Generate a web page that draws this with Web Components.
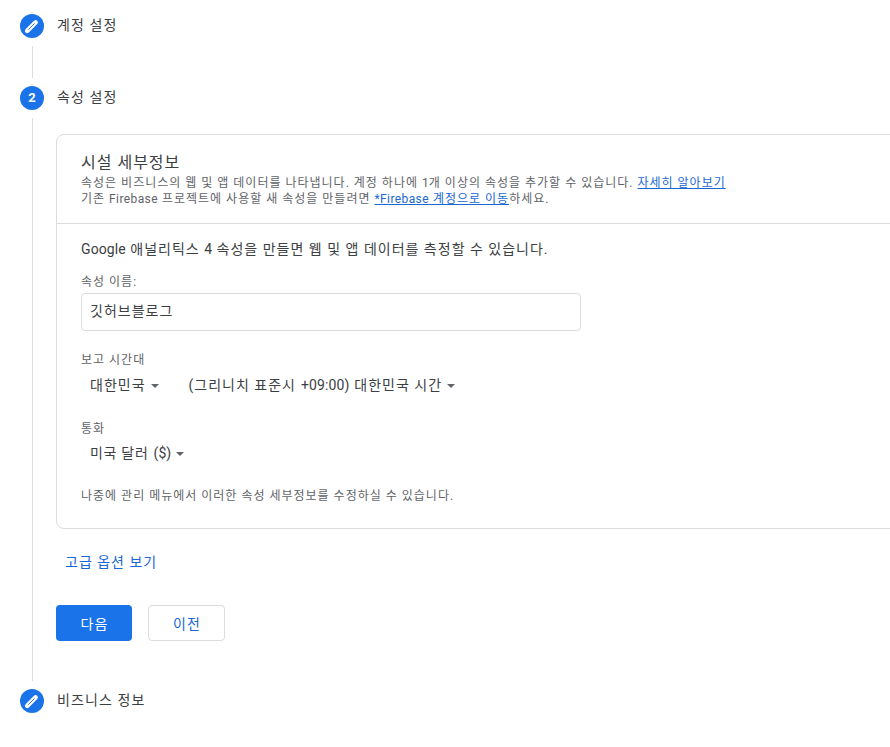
<!DOCTYPE html>
<html lang="ko">
<head>
<meta charset="utf-8">
<title>속성 설정</title>
<style>
  html, body { margin: 0; padding: 0; background: #fff; overflow: hidden; height: 747px; }
  body { font-family: Roboto, "Noto Sans CJK KR", sans-serif; color: #3c4043; }
</style>
</head>
<body>
<setup-stepper>
  <setup-step icon="edit" label="계정 설정" gap="32"></setup-step>
  <setup-step icon="2" label="속성 설정" gap="563">
    <property-card></property-card>
  </setup-step>
  <setup-step icon="edit" label="비즈니스 정보" last></setup-step>
</setup-stepper>

<script>
const stepTemplate = document.createElement("template");
stepTemplate.innerHTML = `
  <style>
    :host {
      display: grid;
      grid-template-columns: 24px 1fr;
      column-gap: 12px;
    }
    #badge {
      width: 24px;
      height: 24px;
      border-radius: 50%;
      background: #1a73e8;
      color: #fff;
      font: 700 13px/24px Roboto, sans-serif;
      text-align: center;
      display: flex;
      align-items: center;
      justify-content: center;
    }
    #label {
      font-size: 14px;
      line-height: 24px;
      color: #3c4043;
      letter-spacing: 1.1px;
      padding-left: 1px;
      transform: translateY(-1px);
    }
    #rail {
      display: flex;
      justify-content: center;
      padding: 8px 0 8px;
    }
    #rail i {
      display: block;
      width: 1px;
      background: #dadce0;
    }
    #body { min-width: 0; }
  </style>
  <div id="badge"></div>
  <div id="label"></div>
  <div id="rail"><i></i></div>
  <div id="body"><slot></slot></div>
`;

class SetupStep extends HTMLElement {
  connectedCallback() {
    if (this.shadowRoot) return;
    const root = this.attachShadow({ mode: "open" });
    root.appendChild(stepTemplate.content.cloneNode(true));
    const icon = this.getAttribute("icon");
    const badge = root.querySelector("#badge");
    if (icon === "edit") {
      badge.innerHTML = `<svg width="24" height="24" viewBox="0 0 24 24"><path d="M7.2 16.8 15.6 8.4" stroke="#fff" stroke-width="4.6" stroke-linecap="round" fill="none"/><path d="M8.4 15.6 14.6 9.4" stroke="#1a73e8" stroke-width=".9" fill="none"/></svg>`;
    } else {
      badge.textContent = icon;
    }
    root.querySelector("#label").textContent = this.getAttribute("label");
    const rail = root.querySelector("#rail");
    if (this.hasAttribute("last")) {
      rail.style.display = "none";
    } else {
      rail.style.minHeight = this.getAttribute("gap") + "px";
      rail.querySelector("i").style.height = this.getAttribute("gap") + "px";
    }
  }
}

const stepperTemplate = document.createElement("template");
stepperTemplate.innerHTML = `
  <style>
    :host {
      display: block;
      padding: 14px 0 0 20px;
      width: 1000px;
    }
  </style>
  <slot></slot>
`;

class SetupStepper extends HTMLElement {
  constructor() {
    super();
    this.attachShadow({ mode: "open" }).appendChild(stepperTemplate.content.cloneNode(true));
  }
}

const dropdownTemplate = document.createElement("template");
dropdownTemplate.innerHTML = `
  <style>
    :host {
      display: inline-flex;
      align-items: center;
      font-size: 14px;
      line-height: 24px;
      color: #3c4043;
      letter-spacing: 1px;
      gap: 5px;
    }
    svg { display: block; margin-top: 2px; }
  </style>
  <slot></slot>
  <svg width="8" height="4" viewBox="0 0 8 4"><path d="M0 0h8L4 4z" fill="#5f6368"/></svg>
`;

class FieldDropdown extends HTMLElement {
  constructor() {
    super();
    this.attachShadow({ mode: "open" }).appendChild(dropdownTemplate.content.cloneNode(true));
  }
}

const cardTemplate = document.createElement("template");
cardTemplate.innerHTML = `
  <style>
    :host {
      display: block;
      padding-top: 24px;
      font-size: 12px;
    }
    a { color: #1967d2; }
    .en { letter-spacing: .1px; }
    .fb { letter-spacing: .4px; }
    #card {
      box-sizing: border-box;
      width: 900px;
      height: 395px;
      border: 1px solid #dadce0;
      border-radius: 8px;
    }
    header {
      box-sizing: border-box;
      height: 89px;
      padding: 16px 24px 0;
      border-bottom: 1px solid #dadce0;
    }
    h2 {
      margin: 0;
      font-size: 16px;
      line-height: 24px;
      font-weight: 400;
      color: #3c4043;
      letter-spacing: 1px;
    }
    header p {
      margin: 0;
      font-size: 12px;
      line-height: 16px;
      color: #5f6368;
      letter-spacing: 1px;
    }
    section { padding: 15px 24px 0; }
    .lead { font-size: 14px; line-height: 20px; color: #3c4043; letter-spacing: 1px; }
    .label { font-size: 12px; line-height: 16px; color: #5f6368; letter-spacing: 1px; }
    #name {
      box-sizing: border-box;
      width: 500px;
      height: 38px;
      margin-top: 3px;
      padding: 0 8px;
      border: 1px solid #dadce0;
      border-radius: 4px;
      font-size: 14px;
      line-height: 34px;
      color: #3c4043;
      letter-spacing: 1px;
    }
    .row { display: flex; gap: 30px; padding: 5px 0 0 9px; }
    .row.single { padding-top: 4px; letter-spacing: .8px; }
    .row.single field-dropdown { letter-spacing: .7px; }
    #foot { font-size: 12px; line-height: 16px; color: #5f6368; margin-top: 23px; letter-spacing: 1px; }
    #more {
      display: block;
      margin: 23px 0 0 8px;
      padding-left: 1px;
      font-size: 14px;
      line-height: 20px;
      color: #1967d2;
      text-decoration: none;
      letter-spacing: 1px;
    }
    #actions { display: flex; gap: 16px; margin-top: 33px; }
    button {
      box-sizing: border-box;
      height: 36px;
      border-radius: 4px;
      font: inherit;
      font-size: 14px;
      padding: 0 0 0 1px;
      letter-spacing: 1px;
    }
    #next { width: 76px; background: #1a73e8; color: #fff; border: 0; }
    #prev { width: 77px; background: #fff; color: #1967d2; border: 1px solid #dadce0; }
  </style>
  <div id="card">
    <header>
      <h2>시설 세부정보</h2>
      <p>속성은 비즈니스의 웹 및 앱 데이터를 나타냅니다. 계정 하나에 <span class="en">1</span>개 이상의 속성을 추가할 수 있습니다. <a href="#">자세히 알아보기</a></p>
      <p>기존 <span class="fb">Firebase</span> 프로젝트에 사용할 새 속성을 만들려면 <a href="#"><span class="fb">*Firebase</span> 계정으로 이동</a>하세요.</p>
    </header>
    <section>
      <div class="lead"><span class="en">Google</span> 애널리틱스 <span class="en">4</span> 속성을 만들면 웹 및 앱 데이터를 측정할 수 있습니다.</div>
      <div class="label" style="margin-top:15px">속성 이름:</div>
      <div id="name">깃허브블로그</div>
      <div class="label" style="margin-top:21px">보고 시간대</div>
      <div class="row">
        <field-dropdown>대한민국</field-dropdown>
        <field-dropdown>(그리니치 표준시 <span class="en">+09:00)</span> 대한민국 시간</field-dropdown>
      </div>
      <div class="label" style="margin-top:24px">통화</div>
      <div class="row single"><field-dropdown>미국 달러 <span class="en">($)</span></field-dropdown></div>
      <div id="foot">나중에 관리 메뉴에서 이러한 속성 세부정보를 수정하실 수 있습니다.</div>
    </section>
  </div>
  <a id="more" href="#">고급 옵션 보기</a>
  <div id="actions">
    <button id="next">다음</button>
    <button id="prev">이전</button>
  </div>
`;

class PropertyCard extends HTMLElement {
  constructor() {
    super();
    this.attachShadow({ mode: "open" }).appendChild(cardTemplate.content.cloneNode(true));
  }
}

customElements.define("field-dropdown", FieldDropdown);
customElements.define("property-card", PropertyCard);
customElements.define("setup-step", SetupStep);
customElements.define("setup-stepper", SetupStepper);
</script>
</body>
</html>
